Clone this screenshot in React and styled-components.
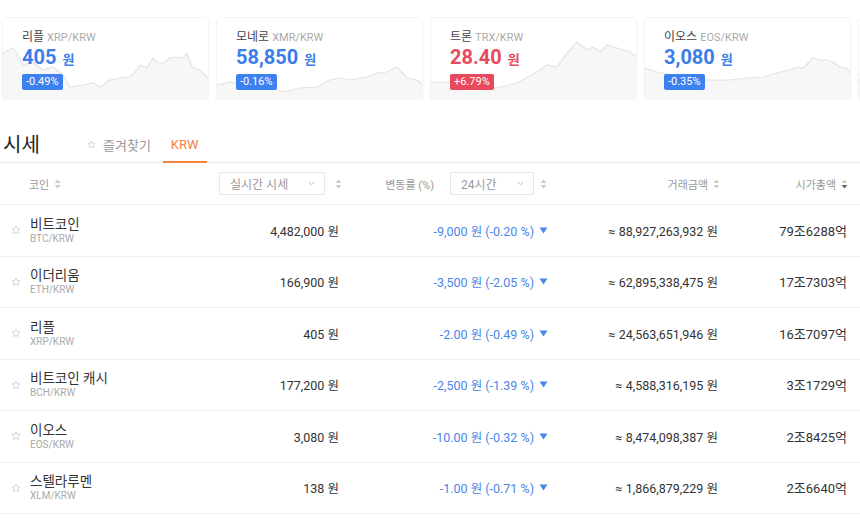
import React from 'react';
import styled, { createGlobalStyle } from 'styled-components';

const Global = createGlobalStyle`
  html, body { margin: 0; padding: 0; background: #fff; }
  body { font-family: Roboto, "Noto Sans CJK KR", sans-serif; color: #333; }
  * { box-sizing: border-box; }
`;

const BLUE = '#3b7ee9';
const RED = '#e8495d';
const CHG_BLUE = '#4a86e8';

const Page = styled.div`
  width: 860px;
  height: 519px;
  overflow: hidden;
`;

const CardRow = styled.div`
  display: flex;
  gap: 9px;
  padding: 18px 0 0 3px;
  width: 860px;
  overflow: hidden;
`;

const Card = styled.div`
  position: relative;
  flex: 0 0 205px;
  height: 82px;
  border-radius: 4px;
  background: #fff;
  box-shadow: 0 0 0 1px #f3f3f3, 0 1px 4px rgba(0, 0, 0, 0.04);
  overflow: hidden;
  padding: 11px 0 0 19px;
`;

const Chart = styled.svg`
  position: absolute;
  left: 0;
  top: 0;
  width: 205px;
  height: 82px;
`;

const CardBody = styled.div`
  position: relative;
  z-index: 1;
  display: flex;
  flex-direction: column;
  align-items: flex-start;
`;

const CardName = styled.div`
  height: 16px;
  line-height: 16px;
  font-size: 12px;
  color: #444;
  span {
    font-size: 11px;
    color: #aaa;
    margin-left: 3px;
  }
`;

const CardPrice = styled.div`
  height: 24px;
  line-height: 24px;
  font-size: 20px;
  font-weight: 700;
  color: ${p => (p.$up ? RED : BLUE)};
  small {
    font-size: 13px;
    margin-left: 6px;
  }
`;

const Badge = styled.div`
  margin-top: 5px;
  height: 16px;
  line-height: 16px;
  padding: 0 4px;
  font-size: 11px;
  color: #fff;
  border-radius: 2px;
  background: ${p => (p.$up ? RED : '#3d80f0')};
`;

const SectionHead = styled.div`
  margin-top: 27px;
  height: 36px;
  display: flex;
  align-items: stretch;
  border-bottom: 1px solid #ececec;
`;

const Title = styled.div`
  padding-left: 3px;
  width: 79px;
  font-size: 20px;
  line-height: 36px;
  color: #222;
`;

const Tab = styled.div`
  display: flex;
  align-items: center;
  gap: 7px;
  padding: 0 8px;
  margin-right: 4px;
  font-size: 13px;
  color: ${p => (p.$active ? '#f5813f' : '#999')};
  border-bottom: 2px solid ${p => (p.$active ? '#f5813f' : 'transparent')};
  margin-bottom: -1px;
`;

const Grid = styled.div`
  display: grid;
  grid-template-columns: 210px 132px 210px 170px 128px;
  align-items: center;
  border-bottom: 1px solid #efefef;
`;

const HeadRow = styled(Grid)`
  height: 42px;
  font-size: 11px;
  color: #999;
`;

const Row = styled(Grid)`
  height: 51.5px;
  font-size: 12.5px;
  color: #333;
`;

const Cell = styled.div`
  display: flex;
  align-items: center;
  justify-content: ${p => (p.$left ? 'flex-start' : 'flex-end')};
  gap: ${p => p.$gap || 0}px;
  padding-left: ${p => p.$pl || 0}px;
  padding-right: ${p => p.$pr || 0}px;
  font-size: ${p => p.$fs || 'inherit'};
  white-space: nowrap;
`;

const Label = styled.span`
  margin-right: 10px;
`;

const Select = styled.div`
  width: ${p => p.$w}px;
  height: 23px;
  border: 1px solid #e6e6e6;
  border-radius: 2px;
  display: flex;
  align-items: center;
  justify-content: space-between;
  padding: 0 9px 0 10px;
  font-size: 12px;
  color: #999;
  background: #fff;
`;

const NameBlock = styled.div`
  display: flex;
  flex-direction: column;
`;

const CoinName = styled.div`
  font-size: 13.5px;
  line-height: 17px;
  color: #333;
`;

const CoinSym = styled.div`
  font-size: 10px;
  line-height: 12px;
  color: #aaa;
`;

const Change = styled.div`
  display: flex;
  align-items: center;
  gap: 5px;
  color: ${CHG_BLUE};
`;

const Star = ({ size = 10, color = '#cfcfcf' }) => (
  <svg width={size} height={size} viewBox="0 0 24 24" fill="none" stroke={color} strokeWidth="2" strokeLinejoin="round">
    <path d="M12 2.5l2.9 6.2 6.7.7-5 4.6 1.4 6.6L12 17.3 6 20.6l1.4-6.6-5-4.6 6.7-.7z" />
  </svg>
);

const Sort = ({ down }) => (
  <svg width="7" height="10" viewBox="0 0 7 10">
    <path d="M3.5 0.5L6.5 4H0.5z" fill="#ccc" />
    <path d="M3.5 9.5L6.5 6H0.5z" fill={down ? '#666' : '#ccc'} />
  </svg>
);

const Chevron = () => (
  <svg width="7" height="5" viewBox="0 0 7 5">
    <path d="M0.8 1l2.7 2.6L6.2 1" fill="none" stroke="#bbb" strokeWidth="1" />
  </svg>
);

const Tri = () => (
  <svg width="9" height="7" viewBox="0 0 9 7">
    <path d="M0.5 0.5h8L4.5 6.5z" fill={CHG_BLUE} />
  </svg>
);

const cards = [
  {
    name: '리플', sym: 'XRP/KRW', price: '405', pct: '-0.49%', up: false,
    pts: [[3,53],[13,48],[18,55],[23,65],[33,62],[43,70],[53,67],[63,75],[70,87],[83,85],[93,83],[100,87],[110,80],[120,78],[130,77],[137,70],[140,65],[147,68],[153,58],[157,62],[163,63],[170,58],[177,57],[183,58],[187,53],[192,67],[200,70],[208,78]],
  },
  {
    name: '모네로', sym: 'XMR/KRW', price: '58,850', pct: '-0.16%', up: false,
    pts: [[217,85],[230,82],[240,83],[253,88],[267,87],[283,92],[300,88],[317,87],[330,80],[340,78],[350,80],[367,77],[377,73],[387,72],[397,67],[400,70],[407,78],[417,80],[423,85]],
  },
  {
    name: '트론', sym: 'TRX/KRW', price: '28.40', pct: '+6.79%', up: true,
    pts: [[431,82],[447,82],[470,83],[497,88],[517,83],[537,72],[547,65],[557,67],[567,53],[577,42],[580,45],[587,50],[593,47],[600,52],[607,45],[617,48],[630,52],[637,57]],
  },
  {
    name: '이오스', sym: 'EOS/KRW', price: '3,080', pct: '-0.35%', up: false,
    pts: [[645,68],[657,72],[663,73],[683,78],[707,80],[730,80],[747,78],[763,77],[780,72],[790,70],[797,67],[803,68],[813,58],[820,60],[827,60],[833,62],[840,67],[847,68],[852,77]],
  },
  {
    partial: true,
    sym: 'next',
    pts: [[859,80],[900,78],[960,76],[1064,80]],
  },
];

const rows = [
  ['비트코인', 'BTC/KRW', '4,482,000', '-9,000', '-0.20', '88,927,263,932', '79조6288억'],
  ['이더리움', 'ETH/KRW', '166,900', '-3,500', '-2.05', '62,895,338,475', '17조7303억'],
  ['리플', 'XRP/KRW', '405', '-2.00', '-0.49', '24,563,651,946', '16조7097억'],
  ['비트코인 캐시', 'BCH/KRW', '177,200', '-2,500', '-1.39', '4,588,316,195', '3조1729억'],
  ['이오스', 'EOS/KRW', '3,080', '-10.00', '-0.32', '8,474,098,387', '2조8425억'],
  ['스텔라루멘', 'XLM/KRW', '138', '-1.00', '-0.71', '1,866,879,229', '2조6640억'],
];

const Spark = ({ pts, x0 }) => {
  const local = pts.map(([x, y]) => [x - x0, y - 18]);
  const line = local.map(([x, y]) => `${x},${y}`).join(' ');
  const first = local[0];
  const last = local[local.length - 1];
  const area = `${first[0]},82 ${line} ${last[0]},82`;
  return (
    <Chart viewBox="0 0 205 82">
      <polygon points={area} fill="#f7f7f7" />
      <polyline points={line} fill="none" stroke="#e4e4e4" strokeWidth="1.2" />
    </Chart>
  );
};

export default function App() {
  return (
    <Page>
      <Global />
      <CardRow>
        {cards.map((c, i) => (
          <Card key={c.sym}>
            <Spark pts={c.pts} x0={3 + i * 214} />
            {!c.partial && (
              <CardBody>
                <CardName>{c.name}<span>{c.sym}</span></CardName>
                <CardPrice $up={c.up}>{c.price}<small>원</small></CardPrice>
                <Badge $up={c.up}>{c.pct}</Badge>
              </CardBody>
            )}
          </Card>
        ))}
      </CardRow>

      <SectionHead>
        <Title>시세</Title>
        <Tab><Star size={9} />즐겨찾기</Tab>
        <Tab $active>KRW</Tab>
      </SectionHead>

      <HeadRow>
        <Cell $left $pl={29} $gap={5}>코인 <Sort /></Cell>
        <Cell $gap={10}>
          <Select $w={106}>실시간 시세<Chevron /></Select>
          <Sort />
        </Cell>
        <Cell $gap={6} $pr={5}>
          <Label>변동률 (%)</Label>
          <Select $w={84}>24시간<Chevron /></Select>
          <Sort />
        </Cell>
        <Cell $gap={5} $pr={2}>거래금액 <Sort /></Cell>
        <Cell $gap={5} $pr={2}>시가총액 <Sort down /></Cell>
      </HeadRow>

      {rows.map(r => (
        <Row key={r[1]}>
          <Cell $left $pl={11} $gap={9}>
            <Star />
            <NameBlock>
              <CoinName>{r[0]}</CoinName>
              <CoinSym>{r[1]}</CoinSym>
            </NameBlock>
          </Cell>
          <Cell $pr={3}>{r[2]} 원</Cell>
          <Cell $pr={4}>
            <Change>{r[3]} 원 ({r[4]} %)<Tri /></Change>
          </Cell>
          <Cell $pr={4}>≈ {r[5]} 원</Cell>
          <Cell $pr={3} $fs="13px">{r[6]}</Cell>
        </Row>
      ))}
    </Page>
  );
}
